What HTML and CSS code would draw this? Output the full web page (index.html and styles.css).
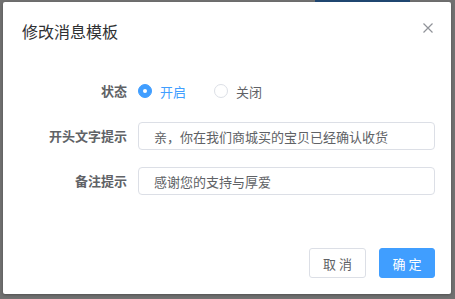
FILE: index.html
```html
<!DOCTYPE html>
<html lang="zh-CN">
<head>
  <meta charset="UTF-8">
  <title>修改消息模板</title>
  <link rel="stylesheet" href="styles.css">
</head>
<body>
  <div class="page-tab"></div>

  <div class="dialog">
    <div class="dialog-header">
      <span class="dialog-title">修改消息模板</span>
      <button class="dialog-close" type="button" aria-label="关闭">
        <svg width="10" height="10" viewBox="0 0 10 10">
          <path d="M0.5 0.5L9.5 9.5M9.5 0.5L0.5 9.5" stroke="#909399" stroke-width="1.2" fill="none"/>
        </svg>
      </button>
    </div>

    <form class="dialog-body">
      <label class="form-label">状态</label>
      <div class="radio-group">
        <label class="radio is-checked"><span class="radio-dot"></span>开启</label>
        <label class="radio"><span class="radio-dot"></span>关闭</label>
      </div>

      <label class="form-label" for="head">开头文字提示</label>
      <input class="form-input" id="head" type="text" value="亲，你在我们商城买的宝贝已经确认收货">

      <label class="form-label" for="note">备注提示</label>
      <input class="form-input" id="note" type="text" value="感谢您的支持与厚爱">
    </form>

    <div class="dialog-footer">
      <button class="btn" type="button">取 消</button>
      <button class="btn btn-primary" type="button">确 定</button>
    </div>
  </div>
</body>
</html>
```

FILE: styles.css
```css
html, body { height: 100%; }
body {
  margin: 0; padding: 2px 3px;
  box-sizing: border-box;
  background: #717171;
  font-family: "Noto Sans CJK SC", "Liberation Sans", sans-serif;
  color: #606266;
}
.page-tab {
  position: absolute; top: 0; left: 315px;
  width: 95px; height: 2px; background: #1f4670;
}

.dialog {
  width: 448px; height: 292px;
  background: #fff; border-radius: 2px;
  box-shadow: 0 1px 3px rgba(0,0,0,0.3);
  display: flex; flex-direction: column;
}
.dialog-header {
  display: flex; justify-content: space-between; align-items: flex-start;
  padding: 17px 18px 0 19px;
}
.dialog-title { font-size: 16px; line-height: 24px; color: #303133; }
.dialog-close {
  border: none; background: none; padding: 0;
  margin-top: 4px; width: 10px; height: 10px; line-height: 0; cursor: pointer;
}

.dialog-body {
  flex: 1; margin: 0;
  padding: 34px 16px 0 0;
  display: grid; grid-template-columns: 135px 1fr;
  grid-auto-rows: 28px; row-gap: 17px;
  align-content: start;
}
.form-label {
  font-size: 13px; font-weight: bold; color: #606266;
  text-align: right; padding-right: 11px;
  line-height: 28px;
}
.radio-group { display: flex; align-items: center; }
.radio {
  display: flex; align-items: center;
  font-size: 13px; color: #606266;
  margin-right: 28px; cursor: pointer;
}
.radio-dot {
  width: 12px; height: 12px; border-radius: 50%;
  border: 1px solid #dcdfe6; margin-right: 8px;
  box-sizing: content-box; position: relative;
}
.radio.is-checked { color: #409eff; }
.radio.is-checked .radio-dot { background: #409eff; border-color: #409eff; }
.radio.is-checked .radio-dot::after {
  content: ""; position: absolute; left: 4px; top: 4px;
  width: 4px; height: 4px; border-radius: 50%; background: #fff;
}
.form-input {
  box-sizing: border-box; width: 100%; height: 28px;
  border: 1px solid #dcdfe6; border-radius: 4px;
  padding: 0 15px; font: inherit; font-size: 13px; color: #606266;
  outline: none;
}

.dialog-footer {
  display: flex; justify-content: flex-end; gap: 13px;
  padding: 0 16px 16px 0;
}
.btn {
  box-sizing: border-box; width: 57px; height: 30px;
  border: 1px solid #dcdfe6; border-radius: 3px; background: #fff;
  font-family: inherit; font-size: 13px; color: #606266; cursor: pointer;
}
.btn-primary { width: 56px; background: #409eff; border-color: #409eff; color: #fff; }
```
